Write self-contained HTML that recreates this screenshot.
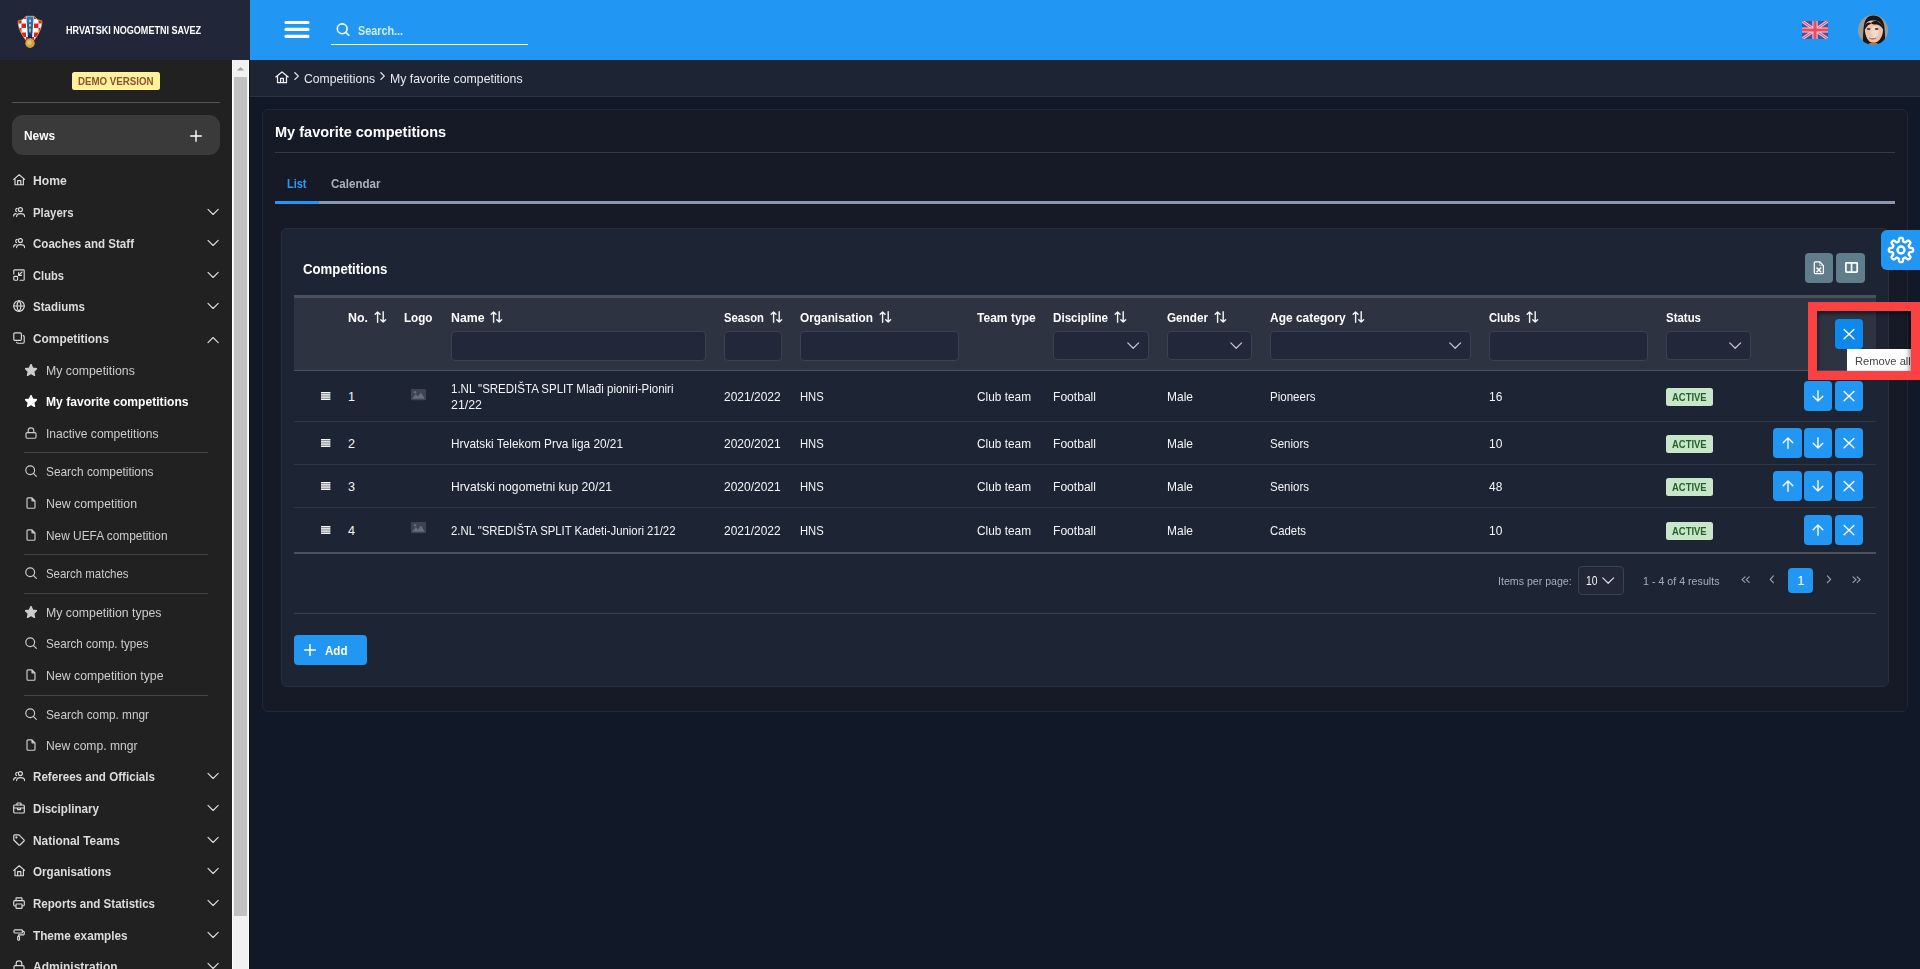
<!DOCTYPE html>
<html lang="en"><head><meta charset="utf-8"><title>My favorite competitions</title>
<style>
html,body{margin:0;padding:0;background:#111827;}
body{width:1920px;height:969px;overflow:hidden;position:relative;font-family:"Liberation Sans", sans-serif;}
#root{position:absolute;left:0;top:0;width:1920px;height:969px;overflow:hidden;}
#root div,#root span.t,#root svg{position:absolute;box-sizing:border-box;}
span.t{white-space:nowrap;}
</style></head>
<body><div id="root">
<section class="page-backgrounds">
<div style="left:0px;top:0px;width:1920px;height:969px;background:#111827"></div>
<div style="left:0px;top:60px;width:232px;height:909px;background:#212121"></div>
<div style="left:0px;top:0px;width:250px;height:60px;background:#222639"></div>
<div style="left:232px;top:60px;width:17px;height:909px;background:#f1f1f1;border-left:1px solid #fff;border-right:1px solid #fff"></div>
<div style="left:234px;top:77px;width:13px;height:839px;background:#c1c1c1"></div>
<svg style="left:232px;top:60px;" width="17" height="17" viewBox="0 0 17 17"><path d="M4.8 10.6 L8.5 6.9 L12.2 10.6 Z" fill="#a3a3a3"/></svg>
<div style="left:249px;top:60px;width:1px;height:909px;background:#0e1320"></div>
<div style="left:250px;top:0px;width:1670px;height:60px;background:#2196f3"></div>
<div style="left:250px;top:60px;width:1670px;height:37px;background:#1d2433;border-bottom:1px solid #2b3242"></div>
</section>
<aside class="sidebar">
<svg style="left:17px;top:14.6px;" width="26" height="34" viewBox="0 0 26 34"><defs><clipPath id="sh"><path d="M1 6 C4 5.5 7 4 9 1.2 L17 1.2 C19 4 22 5.5 25 6 C25 14 20 22 15.5 27 L10.5 27 C6 22 1 14 1 6 Z"/></clipPath></defs>
<g clip-path="url(#sh)"><rect width="26" height="30" fill="#fff"/>
<g fill="#e0231c"><rect x="0" y="4" width="4.5" height="4.5"/><rect x="4.5" y="0" width="4.5" height="4"/><rect x="4.5" y="8.5" width="4.5" height="4.5"/><rect x="0" y="13" width="4.5" height="4.5"/><rect x="4.5" y="17.5" width="4.5" height="4.5"/><rect x="17" y="0" width="4.5" height="4"/><rect x="21.5" y="4" width="4.5" height="4.5"/><rect x="17" y="8.5" width="4.5" height="4.5"/><rect x="21.5" y="13" width="4.5" height="4.5"/><rect x="17" y="17.5" width="4.5" height="4.5"/><rect x="9" y="22" width="3" height="4.5"/><rect x="14" y="22" width="3" height="4.5"/></g>
<linearGradient id="bg1" x1="0" y1="0" x2="0" y2="1"><stop offset="0" stop-color="#2f7fd0"/><stop offset=".7" stop-color="#1a4f9a"/><stop offset="1" stop-color="#0f1f45"/></linearGradient><path d="M9.3 1.2 L16.7 1.2 L15 23.5 L11 23.5 Z" fill="url(#bg1)"/><g fill="#e8d070" opacity=".85"><rect x="12" y="4.6" width="2" height="2.6"/><rect x="12" y="9" width="2" height="2.6"/><rect x="12.2" y="13.4" width="1.6" height="4"/></g></g>
<path d="M1 6 C4 5.5 7 4 9 1.2 L17 1.2 C19 4 22 5.5 25 6 C25 14 20 22 15.5 27 L10.5 27 C6 22 1 14 1 6 Z" fill="none" stroke="#c9a24a" stroke-width=".7"/>
<circle cx="13" cy="28.3" r="4.7" fill="#d0a53f"/><circle cx="12.3" cy="27.6" r="2.3" fill="#e3c46e"/></svg>
<span id="t0" class="t" style="left:66px;top:23px;font-size:10px;font-weight:700;color:#ffffff;line-height:15px;letter-spacing:0px;transform:scaleX(0.9043);transform-origin:0 0;">HRVATSKI NOGOMETNI SAVEZ</span>
<div style="left:72px;top:72px;width:88px;height:18px;background:#fff29a;border-radius:2.5px"></div>
<span id="t1" class="t" style="left:78px;top:74px;font-size:10.2px;font-weight:700;color:#8d5030;line-height:15px;letter-spacing:0px;transform:scaleX(0.9527);transform-origin:0 0;">DEMO VERSION</span>
<div style="left:12px;top:102px;width:208px;height:1px;background:#555555"></div>
<div style="left:12px;top:115px;width:208px;height:40px;background:#3a3a3a;border-radius:11px"></div>
<span id="t2" class="t" style="left:24px;top:126px;font-size:12.8px;font-weight:700;color:#ffffff;line-height:19px;letter-spacing:0px;transform:scaleX(0.9271);transform-origin:0 0;">News</span>
<svg style="left:190px;top:129.5px;" width="12" height="12" viewBox="0 0 12 12"><path d="M6 .7v10.6M.7 6h10.6" stroke="#fff" stroke-width="1.4" fill="none" stroke-linecap="round"/></svg>
<svg style="left:12.7px;top:173.7px;" width="12" height="12" viewBox="0 0 12 12"><path fill="none" stroke="#dcdcdc" stroke-width="1.15" stroke-linecap="round" stroke-linejoin="round" d="M.7 5.4 L6.2 .8 L11.7 5.4 M2 4.6 V10.7 H10.4 V4.6 M4.6 10.6 V6.6 H7.8 V10.6"/></svg>
<span id="t3" class="t" style="left:33.3px;top:172px;font-size:12.6px;font-weight:700;color:#dcdcdc;line-height:18px;letter-spacing:0px;transform:scaleX(0.9657);transform-origin:0 0;">Home</span>
<svg style="left:12.7px;top:205.7px;" width="12" height="12" viewBox="0 0 12 12"><g fill="none" stroke="#dcdcdc" stroke-width="1.15" stroke-linecap="round" stroke-linejoin="round"><circle cx="7.4" cy="3.6" r="2"/><path d="M3.6 10.6 C3.6 8.4 5.2 7.6 7.4 7.6 C9.8 7.6 11.6 8.4 11.6 10.6"/><path d="M4.2 2.4 A1.7 1.7 0 0 0 3.6 5.6 M.6 10 C.6 8.4 1.6 7.8 3 7.6"/></g></svg>
<span id="t4" class="t" style="left:33.3px;top:204px;font-size:12.6px;font-weight:700;color:#dcdcdc;line-height:18px;letter-spacing:0px;transform:scaleX(0.9035);transform-origin:0 0;">Players</span>
<svg style="left:207.2px;top:206px;" width="12" height="12" viewBox="0 0 12 12"><path fill="none" stroke="#dcdcdc" stroke-width="1.15" stroke-linecap="round" stroke-linejoin="round" stroke-width="1.3" d="M1 3.3 L6.1 8.5 L11.2 3.3"/></svg>
<svg style="left:12.7px;top:236.7px;" width="12" height="12" viewBox="0 0 12 12"><g fill="none" stroke="#dcdcdc" stroke-width="1.15" stroke-linecap="round" stroke-linejoin="round"><circle cx="7.4" cy="3.6" r="2"/><path d="M3.6 10.6 C3.6 8.4 5.2 7.6 7.4 7.6 C9.8 7.6 11.6 8.4 11.6 10.6"/><path d="M4.2 2.4 A1.7 1.7 0 0 0 3.6 5.6 M.6 10 C.6 8.4 1.6 7.8 3 7.6"/></g></svg>
<span id="t5" class="t" style="left:33.3px;top:235px;font-size:12.6px;font-weight:700;color:#dcdcdc;line-height:18px;letter-spacing:0px;transform:scaleX(0.9192);transform-origin:0 0;">Coaches and Staff</span>
<svg style="left:207.2px;top:237px;" width="12" height="12" viewBox="0 0 12 12"><path fill="none" stroke="#dcdcdc" stroke-width="1.15" stroke-linecap="round" stroke-linejoin="round" stroke-width="1.3" d="M1 3.3 L6.1 8.5 L11.2 3.3"/></svg>
<svg style="left:12.7px;top:268.7px;" width="12" height="12" viewBox="0 0 12 12"><g fill="none" stroke="#dcdcdc" stroke-width="1.15" stroke-linecap="round" stroke-linejoin="round"><path d="M.8 5 V1.6 A.8 .8 0 0 1 1.6 .8 H10.4 A.8 .8 0 0 1 11.2 1.6 V10.4 A.8 .8 0 0 1 10.4 11.2 H7"/><rect x=".8" y="7.4" width="3.8" height="3.8" rx=".8"/><path d="M9 3 L5.6 6.4 M5.6 3.6 V6.4 H8.4"/></g></svg>
<span id="t6" class="t" style="left:33.3px;top:267px;font-size:12.6px;font-weight:700;color:#dcdcdc;line-height:18px;letter-spacing:0px;transform:scaleX(0.8861);transform-origin:0 0;">Clubs</span>
<svg style="left:207.2px;top:269px;" width="12" height="12" viewBox="0 0 12 12"><path fill="none" stroke="#dcdcdc" stroke-width="1.15" stroke-linecap="round" stroke-linejoin="round" stroke-width="1.3" d="M1 3.3 L6.1 8.5 L11.2 3.3"/></svg>
<svg style="left:12.7px;top:299.7px;" width="12" height="12" viewBox="0 0 12 12"><g fill="none" stroke="#dcdcdc" stroke-width="1.15" stroke-linecap="round" stroke-linejoin="round"><circle cx="6" cy="6" r="5.3"/><path d="M.7 6 H11.3 M6 .7 C3.4 3 3.4 9 6 11.3 M6 .7 C8.6 3 8.6 9 6 11.3"/></g></svg>
<span id="t7" class="t" style="left:33.3px;top:298px;font-size:12.6px;font-weight:700;color:#dcdcdc;line-height:18px;letter-spacing:0px;transform:scaleX(0.9173);transform-origin:0 0;">Stadiums</span>
<svg style="left:207.2px;top:300px;" width="12" height="12" viewBox="0 0 12 12"><path fill="none" stroke="#dcdcdc" stroke-width="1.15" stroke-linecap="round" stroke-linejoin="round" stroke-width="1.3" d="M1 3.3 L6.1 8.5 L11.2 3.3"/></svg>
<svg style="left:12.7px;top:331.7px;" width="12" height="12" viewBox="0 0 12 12"><g fill="none" stroke="#dcdcdc" stroke-width="1.15" stroke-linecap="round" stroke-linejoin="round"><rect x=".8" y=".8" width="7.6" height="7.6" rx="1.2"/><path d="M10.2 3.6 A1.2 1.2 0 0 1 11.2 4.8 V10 A1.2 1.2 0 0 1 10 11.2 H4.8 A1.2 1.2 0 0 1 3.6 10.2"/></g></svg>
<span id="t8" class="t" style="left:33.3px;top:330px;font-size:12.6px;font-weight:700;color:#dcdcdc;line-height:18px;letter-spacing:0px;transform:scaleX(0.9445);transform-origin:0 0;">Competitions</span>
<svg style="left:207.2px;top:334.0px;" width="12" height="12" viewBox="0 0 12 12"><path fill="none" stroke="#dcdcdc" stroke-width="1.15" stroke-linecap="round" stroke-linejoin="round" stroke-width="1.3" d="M1 8.7 L6.1 3.5 L11.2 8.7"/></svg>
<svg style="left:12.7px;top:769.7px;" width="12" height="12" viewBox="0 0 12 12"><g fill="none" stroke="#dcdcdc" stroke-width="1.15" stroke-linecap="round" stroke-linejoin="round"><circle cx="7.4" cy="3.6" r="2"/><path d="M3.6 10.6 C3.6 8.4 5.2 7.6 7.4 7.6 C9.8 7.6 11.6 8.4 11.6 10.6"/><path d="M4.2 2.4 A1.7 1.7 0 0 0 3.6 5.6 M.6 10 C.6 8.4 1.6 7.8 3 7.6"/></g></svg>
<span id="t9" class="t" style="left:33.3px;top:768px;font-size:12.6px;font-weight:700;color:#dcdcdc;line-height:18px;letter-spacing:0px;transform:scaleX(0.9222);transform-origin:0 0;">Referees and Officials</span>
<svg style="left:207.2px;top:770px;" width="12" height="12" viewBox="0 0 12 12"><path fill="none" stroke="#dcdcdc" stroke-width="1.15" stroke-linecap="round" stroke-linejoin="round" stroke-width="1.3" d="M1 3.3 L6.1 8.5 L11.2 3.3"/></svg>
<svg style="left:12.7px;top:801.7px;" width="12" height="12" viewBox="0 0 12 12"><g fill="none" stroke="#dcdcdc" stroke-width="1.15" stroke-linecap="round" stroke-linejoin="round"><rect x=".7" y="3" width="10.6" height="8" rx="1"/><path d="M4 3 V1.6 A.6 .6 0 0 1 4.6 1 H7.4 A.6 .6 0 0 1 8 1.6 V3 M.7 6 H11.3 M4.5 6 V7.6 H7.5 V6"/></g></svg>
<span id="t10" class="t" style="left:33.3px;top:800px;font-size:12.6px;font-weight:700;color:#dcdcdc;line-height:18px;letter-spacing:0px;transform:scaleX(0.9243);transform-origin:0 0;">Disciplinary</span>
<svg style="left:207.2px;top:802px;" width="12" height="12" viewBox="0 0 12 12"><path fill="none" stroke="#dcdcdc" stroke-width="1.15" stroke-linecap="round" stroke-linejoin="round" stroke-width="1.3" d="M1 3.3 L6.1 8.5 L11.2 3.3"/></svg>
<svg style="left:12.7px;top:833.7px;" width="12" height="12" viewBox="0 0 12 12"><g fill="none" stroke="#dcdcdc" stroke-width="1.15" stroke-linecap="round" stroke-linejoin="round"><path d="M.8 1.6 A.8 .8 0 0 1 1.6 .8 H6 L11 5.8 A.9 .9 0 0 1 11 7 L7 11 A.9 .9 0 0 1 5.8 11 L.8 6 Z"/><circle cx="3.4" cy="3.4" r=".5"/></g></svg>
<span id="t11" class="t" style="left:33.3px;top:832px;font-size:12.6px;font-weight:700;color:#dcdcdc;line-height:18px;letter-spacing:0px;transform:scaleX(0.9440);transform-origin:0 0;">National Teams</span>
<svg style="left:207.2px;top:834px;" width="12" height="12" viewBox="0 0 12 12"><path fill="none" stroke="#dcdcdc" stroke-width="1.15" stroke-linecap="round" stroke-linejoin="round" stroke-width="1.3" d="M1 3.3 L6.1 8.5 L11.2 3.3"/></svg>
<svg style="left:12.7px;top:864.7px;" width="12" height="12" viewBox="0 0 12 12"><path fill="none" stroke="#dcdcdc" stroke-width="1.15" stroke-linecap="round" stroke-linejoin="round" d="M.7 5.4 L6.2 .8 L11.7 5.4 M2 4.6 V10.7 H10.4 V4.6 M4.6 10.6 V6.6 H7.8 V10.6"/></svg>
<span id="t12" class="t" style="left:33.3px;top:863px;font-size:12.6px;font-weight:700;color:#dcdcdc;line-height:18px;letter-spacing:0px;transform:scaleX(0.9246);transform-origin:0 0;">Organisations</span>
<svg style="left:207.2px;top:865px;" width="12" height="12" viewBox="0 0 12 12"><path fill="none" stroke="#dcdcdc" stroke-width="1.15" stroke-linecap="round" stroke-linejoin="round" stroke-width="1.3" d="M1 3.3 L6.1 8.5 L11.2 3.3"/></svg>
<svg style="left:12.7px;top:896.7px;" width="12" height="12" viewBox="0 0 12 12"><g fill="none" stroke="#dcdcdc" stroke-width="1.15" stroke-linecap="round" stroke-linejoin="round"><path d="M3 3.6 V1.4 A.6 .6 0 0 1 3.6 .8 H8.4 A.6 .6 0 0 1 9 1.4 V3.6"/><rect x=".7" y="3.6" width="10.6" height="5.4" rx="1.2"/><rect x="3" y="7" width="6" height="4.3" rx=".6" fill="#212121"/></g></svg>
<span id="t13" class="t" style="left:33.3px;top:895px;font-size:12.6px;font-weight:700;color:#dcdcdc;line-height:18px;letter-spacing:0px;transform:scaleX(0.9175);transform-origin:0 0;">Reports and Statistics</span>
<svg style="left:207.2px;top:897px;" width="12" height="12" viewBox="0 0 12 12"><path fill="none" stroke="#dcdcdc" stroke-width="1.15" stroke-linecap="round" stroke-linejoin="round" stroke-width="1.3" d="M1 3.3 L6.1 8.5 L11.2 3.3"/></svg>
<svg style="left:12.7px;top:928.7px;" width="12" height="12" viewBox="0 0 12 12"><g fill="none" stroke="#dcdcdc" stroke-width="1.15" stroke-linecap="round" stroke-linejoin="round"><rect x="1" y=".8" width="8.4" height="3.2" rx=".8"/><path d="M9.4 2.4 H10.4 A.8 .8 0 0 1 11.2 3.2 V5 A.8 .8 0 0 1 10.4 5.8 H5.6 V7.4"/><rect x="4.7" y="7.4" width="1.8" height="3.8" rx=".7"/></g></svg>
<span id="t14" class="t" style="left:33.3px;top:927px;font-size:12.6px;font-weight:700;color:#dcdcdc;line-height:18px;letter-spacing:0px;transform:scaleX(0.9319);transform-origin:0 0;">Theme examples</span>
<svg style="left:207.2px;top:929px;" width="12" height="12" viewBox="0 0 12 12"><path fill="none" stroke="#dcdcdc" stroke-width="1.15" stroke-linecap="round" stroke-linejoin="round" stroke-width="1.3" d="M1 3.3 L6.1 8.5 L11.2 3.3"/></svg>
<svg style="left:12.7px;top:959.7px;" width="12" height="12" viewBox="0 0 12 12"><g fill="none" stroke="#dcdcdc" stroke-width="1.15" stroke-linecap="round" stroke-linejoin="round"><rect x="1" y="5.6" width="10" height="5.6" rx="1.2"/><path d="M3.2 5.6 V3.6 A2.8 2.8 0 0 1 8.8 3.6 V5.6"/></g></svg>
<span id="t15" class="t" style="left:33.3px;top:958px;font-size:12.6px;font-weight:700;color:#dcdcdc;line-height:18px;letter-spacing:0px;transform:scaleX(0.9521);transform-origin:0 0;">Administration</span>
<svg style="left:207.2px;top:960px;" width="12" height="12" viewBox="0 0 12 12"><path fill="none" stroke="#dcdcdc" stroke-width="1.15" stroke-linecap="round" stroke-linejoin="round" stroke-width="1.3" d="M1 3.3 L6.1 8.5 L11.2 3.3"/></svg>
<svg style="left:25px;top:363.8px;" width="12" height="12" viewBox="0 0 12 12"><path fill="#cdcdcd" stroke="#cdcdcd" stroke-width="1" stroke-linejoin="round" transform="translate(-.95 -.9) scale(1.16)" d="M6 1 L7.5 4.3 L11.1 4.7 L8.4 7.2 L9.1 10.8 L6 9 L2.9 10.8 L3.6 7.2 L.9 4.7 L4.5 4.3 Z"/></svg>
<span id="t16" class="t" style="left:45.6px;top:362px;font-size:12.6px;font-weight:400;color:#cdcdcd;line-height:18px;letter-spacing:0px;transform:scaleX(0.9758);transform-origin:0 0;">My competitions</span>
<svg style="left:25px;top:394.8px;" width="12" height="12" viewBox="0 0 12 12"><path fill="#ffffff" stroke="#ffffff" stroke-width="1" stroke-linejoin="round" transform="translate(-.95 -.9) scale(1.16)" d="M6 1 L7.5 4.3 L11.1 4.7 L8.4 7.2 L9.1 10.8 L6 9 L2.9 10.8 L3.6 7.2 L.9 4.7 L4.5 4.3 Z"/></svg>
<span id="t17" class="t" style="left:45.6px;top:393px;font-size:12.6px;font-weight:700;color:#ffffff;line-height:18px;letter-spacing:0px;transform:scaleX(0.9605);transform-origin:0 0;">My favorite competitions</span>
<svg style="left:25px;top:426.8px;" width="12" height="12" viewBox="0 0 12 12"><g fill="none" stroke="#cdcdcd" stroke-width="1.15" stroke-linecap="round" stroke-linejoin="round"><rect x="1" y="5.6" width="10" height="5.6" rx="1.2"/><path d="M3.2 5.6 V3.6 A2.8 2.8 0 0 1 8.8 3.6 V5.6"/></g></svg>
<span id="t18" class="t" style="left:45.6px;top:425px;font-size:12.6px;font-weight:400;color:#cdcdcd;line-height:18px;letter-spacing:0px;transform:scaleX(0.9566);transform-origin:0 0;">Inactive competitions</span>
<svg style="left:25px;top:464.8px;" width="12" height="12" viewBox="0 0 12 12"><g fill="none" stroke="#cdcdcd" stroke-width="1.15" stroke-linecap="round" stroke-linejoin="round"><circle cx="5.2" cy="5.2" r="4.4"/><path d="M8.4 8.4 L11.3 11.3"/></g></svg>
<span id="t19" class="t" style="left:45.6px;top:463px;font-size:12.6px;font-weight:400;color:#cdcdcd;line-height:18px;letter-spacing:0px;transform:scaleX(0.9421);transform-origin:0 0;">Search competitions</span>
<svg style="left:25px;top:496.8px;" width="12" height="12" viewBox="0 0 12 12"><g fill="none" stroke="#cdcdcd" stroke-width="1.15" stroke-linecap="round" stroke-linejoin="round"><path d="M2 1.8 A1 1 0 0 1 3 .8 H7 L10 3.8 V10.2 A1 1 0 0 1 9 11.2 H3 A1 1 0 0 1 2 10.2 Z M7 .8 V3.8 H10"/></g></svg>
<span id="t20" class="t" style="left:45.6px;top:495px;font-size:12.6px;font-weight:400;color:#cdcdcd;line-height:18px;letter-spacing:0px;transform:scaleX(0.9773);transform-origin:0 0;">New competition</span>
<svg style="left:25px;top:528.8px;" width="12" height="12" viewBox="0 0 12 12"><g fill="none" stroke="#cdcdcd" stroke-width="1.15" stroke-linecap="round" stroke-linejoin="round"><path d="M2 1.8 A1 1 0 0 1 3 .8 H7 L10 3.8 V10.2 A1 1 0 0 1 9 11.2 H3 A1 1 0 0 1 2 10.2 Z M7 .8 V3.8 H10"/></g></svg>
<span id="t21" class="t" style="left:45.6px;top:527px;font-size:12.6px;font-weight:400;color:#cdcdcd;line-height:18px;letter-spacing:0px;transform:scaleX(0.9433);transform-origin:0 0;">New UEFA competition</span>
<svg style="left:25px;top:566.8px;" width="12" height="12" viewBox="0 0 12 12"><g fill="none" stroke="#cdcdcd" stroke-width="1.15" stroke-linecap="round" stroke-linejoin="round"><circle cx="5.2" cy="5.2" r="4.4"/><path d="M8.4 8.4 L11.3 11.3"/></g></svg>
<span id="t22" class="t" style="left:45.6px;top:565px;font-size:12.6px;font-weight:400;color:#cdcdcd;line-height:18px;letter-spacing:0px;transform:scaleX(0.9066);transform-origin:0 0;">Search matches</span>
<svg style="left:25px;top:605.8px;" width="12" height="12" viewBox="0 0 12 12"><path fill="#cdcdcd" stroke="#cdcdcd" stroke-width="1" stroke-linejoin="round" transform="translate(-.95 -.9) scale(1.16)" d="M6 1 L7.5 4.3 L11.1 4.7 L8.4 7.2 L9.1 10.8 L6 9 L2.9 10.8 L3.6 7.2 L.9 4.7 L4.5 4.3 Z"/></svg>
<span id="t23" class="t" style="left:45.6px;top:604px;font-size:12.6px;font-weight:400;color:#cdcdcd;line-height:18px;letter-spacing:0px;transform:scaleX(0.9764);transform-origin:0 0;">My competition types</span>
<svg style="left:25px;top:636.8px;" width="12" height="12" viewBox="0 0 12 12"><g fill="none" stroke="#cdcdcd" stroke-width="1.15" stroke-linecap="round" stroke-linejoin="round"><circle cx="5.2" cy="5.2" r="4.4"/><path d="M8.4 8.4 L11.3 11.3"/></g></svg>
<span id="t24" class="t" style="left:45.6px;top:635px;font-size:12.6px;font-weight:400;color:#cdcdcd;line-height:18px;letter-spacing:0px;transform:scaleX(0.9210);transform-origin:0 0;">Search comp. types</span>
<svg style="left:25px;top:668.8px;" width="12" height="12" viewBox="0 0 12 12"><g fill="none" stroke="#cdcdcd" stroke-width="1.15" stroke-linecap="round" stroke-linejoin="round"><path d="M2 1.8 A1 1 0 0 1 3 .8 H7 L10 3.8 V10.2 A1 1 0 0 1 9 11.2 H3 A1 1 0 0 1 2 10.2 Z M7 .8 V3.8 H10"/></g></svg>
<span id="t25" class="t" style="left:45.6px;top:667px;font-size:12.6px;font-weight:400;color:#cdcdcd;line-height:18px;letter-spacing:0px;transform:scaleX(0.9759);transform-origin:0 0;">New competition type</span>
<svg style="left:25px;top:707.8px;" width="12" height="12" viewBox="0 0 12 12"><g fill="none" stroke="#cdcdcd" stroke-width="1.15" stroke-linecap="round" stroke-linejoin="round"><circle cx="5.2" cy="5.2" r="4.4"/><path d="M8.4 8.4 L11.3 11.3"/></g></svg>
<span id="t26" class="t" style="left:45.6px;top:706px;font-size:12.6px;font-weight:400;color:#cdcdcd;line-height:18px;letter-spacing:0px;transform:scaleX(0.9373);transform-origin:0 0;">Search comp. mngr</span>
<svg style="left:25px;top:738.8px;" width="12" height="12" viewBox="0 0 12 12"><g fill="none" stroke="#cdcdcd" stroke-width="1.15" stroke-linecap="round" stroke-linejoin="round"><path d="M2 1.8 A1 1 0 0 1 3 .8 H7 L10 3.8 V10.2 A1 1 0 0 1 9 11.2 H3 A1 1 0 0 1 2 10.2 Z M7 .8 V3.8 H10"/></g></svg>
<span id="t27" class="t" style="left:45.6px;top:737px;font-size:12.6px;font-weight:400;color:#cdcdcd;line-height:18px;letter-spacing:0px;transform:scaleX(0.9613);transform-origin:0 0;">New comp. mngr</span>
<div style="left:24px;top:452px;width:184px;height:1px;background:#454545"></div>
<div style="left:24px;top:554px;width:184px;height:1px;background:#454545"></div>
<div style="left:24px;top:593px;width:184px;height:1px;background:#454545"></div>
<div style="left:24px;top:695px;width:184px;height:1px;background:#454545"></div>
</aside>
<header class="topbar">
<svg style="left:284px;top:20px;" width="26" height="19" viewBox="0 0 26 19"><g fill="#fff"><rect x=".5" y=".9" width="25" height="3.2" rx="1.6"/><rect x=".5" y="7.8" width="25" height="3.2" rx="1.6"/><rect x=".5" y="14.8" width="25" height="3.2" rx="1.6"/></g></svg>
<svg style="left:335px;top:22px;" width="16" height="15" viewBox="0 0 16 15"><g fill="none" stroke="#f2f9ff" stroke-width="1.6" stroke-linecap="round"><circle cx="7.2" cy="6.8" r="4.9"/><path d="M10.8 10.4 L13.9 13.3"/></g></svg>
<span id="t28" class="t" style="left:358px;top:22px;font-size:12.6px;font-weight:700;color:#d3eafd;line-height:18px;letter-spacing:0px;transform:scaleX(0.8569);transform-origin:0 0;">Search...</span>
<div style="left:331px;top:43.7px;width:197px;height:1.6px;background:#ffffff"></div>
<svg style="left:1802px;top:21px;" width="26" height="18" viewBox="0 0 26 18"><rect width="26" height="18" fill="#4754a6"/>
<path d="M0 0 L26 18 M26 0 L0 18" stroke="#e7d3e2" stroke-width="3"/>
<path d="M0 0 L26 18 M26 0 L0 18" stroke="#ee5a72" stroke-width="1.2"/>
<path d="M13 0 V18 M0 9 H26" stroke="#f3d5dc" stroke-width="5.2"/>
<path d="M13 0 V18 M0 9 H26" stroke="#ef4860" stroke-width="3.2"/></svg>
<svg style="left:1858px;top:15px;" width="30" height="30" viewBox="0 0 30 30"><defs><clipPath id="av"><circle cx="15" cy="15" r="15"/></clipPath><filter id="bl" x="-10%" y="-10%" width="120%" height="120%"><feGaussianBlur stdDeviation=".55"/></filter></defs><g clip-path="url(#av)"><g filter="url(#bl)">
<rect x="-2" y="-2" width="34" height="34" fill="#9b9b97"/>
<path d="M4.5 32 C5 24 5 16 6 10 C7 3 11 .2 15.5 .4 C21 .5 25.5 4 26.3 11 C27 18 27.5 25 26.5 32 Z" fill="#1b1718"/>
<path d="M6.8 14 C6.6 8 10 5.5 15 5.6 C20.5 5.5 24.6 8 25 14 C25.3 20 22 27.6 15.6 27.8 C10 27.8 7 21 6.8 14 Z" fill="#e9c3ad"/>
<ellipse cx="16.8" cy="16.5" rx="4" ry="5.5" fill="#f6e0d2" opacity=".75"/>
<path d="M6 13.5 C7 8 10 6.2 13.5 8.4 C10.5 9.5 8.5 11 6.6 15.5 Z M13 8 C15 5.6 19.5 5.4 21.5 7.4 C24 8.5 25.6 11.5 25.6 15.5 C24 11.6 21.5 9.8 18.5 9.4 C16.5 9.6 14.5 9.4 13 8 Z" fill="#1b1718"/>
<ellipse cx="10.6" cy="14" rx="1.9" ry="1" fill="#4a3b38"/><ellipse cx="18.7" cy="14" rx="1.9" ry="1" fill="#4a3b38"/>
<path d="M11.2 21.4 C13 22.4 16.5 22.4 18.2 21.4 C17.4 23.6 12.4 23.8 11.2 21.4 Z" fill="#fbeeea"/>
<path d="M11.4 22.8 C13 24.6 16.4 24.6 18 22.8 C16.6 24 12.8 24 11.4 22.8 Z" fill="#c9545a" stroke="#c9545a" stroke-width=".7"/>
<path d="M9.5 31 C10 28 12 27.6 15.5 27.8 C19 27.6 20.5 28 21 31 Z" fill="#c9712c"/>
</g></g></svg>
</header>
<nav class="breadcrumb">
<svg style="left:274.5px;top:70.6px;" width="14" height="13" viewBox="0 0 14 13"><path fill="none" stroke="#f0f0f0" stroke-width="1.25" stroke-linejoin="round" stroke-linecap="round" d="M.8 5.9 L7 .9 L13.2 5.9 M2.5 4.9 V11.7 H11.5 V4.9 M5.6 11.6 V7.4 H8.4 V11.6"/></svg>
<svg style="left:293.7px;top:72.4px;" width="6" height="9" viewBox="0 0 6 9"><path fill="none" stroke="#e8e8e8" stroke-width="1.3" stroke-linecap="round" stroke-linejoin="round" d="M.9 .8 L4.3 4.1 L.9 7.4"/></svg>
<span id="t29" class="t" style="left:304px;top:70px;font-size:12.6px;font-weight:400;color:#e8eaee;line-height:18px;letter-spacing:0px;transform:scaleX(0.9660);transform-origin:0 0;">Competitions</span>
<svg style="left:380.2px;top:72.4px;" width="6" height="9" viewBox="0 0 6 9"><path fill="none" stroke="#e8e8e8" stroke-width="1.3" stroke-linecap="round" stroke-linejoin="round" d="M.9 .8 L4.3 4.1 L.9 7.4"/></svg>
<span id="t30" class="t" style="left:390.4px;top:70px;font-size:12.6px;font-weight:400;color:#e8eaee;line-height:18px;letter-spacing:0px;transform:scaleX(0.9765);transform-origin:0 0;">My favorite competitions</span>
</nav>
<main class="content">
<div style="left:262px;top:109px;width:1646px;height:603px;background:#161a27;border:1px solid #232836;border-radius:6px"></div>
<span id="t31" class="t" style="left:275.3px;top:121px;font-size:15.2px;font-weight:700;color:#ffffff;line-height:21px;letter-spacing:0px;transform:scaleX(0.9569);transform-origin:0 0;">My favorite competitions</span>
<div style="left:275px;top:152px;width:1620px;height:1px;background:#343a48"></div>
<span id="t32" class="t" style="left:287px;top:175px;font-size:12.6px;font-weight:700;color:#2b9af3;line-height:18px;letter-spacing:0px;transform:scaleX(0.8709);transform-origin:0 0;">List</span>
<span id="t33" class="t" style="left:330.5px;top:175px;font-size:12.6px;font-weight:700;color:#aab1bf;line-height:18px;letter-spacing:0px;transform:scaleX(0.9183);transform-origin:0 0;">Calendar</span>
<div style="left:275px;top:201px;width:1620px;height:3px;background:#8b97ad"></div>
<div style="left:275px;top:201px;width:44px;height:3px;background:#2196f3"></div>
<div style="left:281px;top:228px;width:1608px;height:459px;background:#1d2534;border:1px solid #272f3f;border-radius:6px"></div>
<span id="t34" class="t" style="left:302.5px;top:259px;font-size:14px;font-weight:700;color:#ffffff;line-height:20px;letter-spacing:0px;transform:scaleX(0.9424);transform-origin:0 0;">Competitions</span>
<div style="left:1805px;top:253px;width:28px;height:30px;background:#607d8b;border-radius:4px"></div>
<div style="left:1836px;top:253px;width:29px;height:30px;background:#607d8b;border-radius:4px"></div>
<svg style="left:1813.4px;top:261px;" width="12" height="14" viewBox="0 0 12 14"><g fill="none" stroke="#fff" stroke-width="1.25" stroke-linejoin="round" stroke-linecap="round"><path d="M1.3 1.8 A1 1 0 0 1 2.3 .8 H6.6 L10.4 4.6 V11.6 A1 1 0 0 1 9.4 12.6 H2.3 A1 1 0 0 1 1.3 11.6 Z"/><path d="M6.6 1 V4.6 H10.2" stroke-width=".8" opacity=".65"/><path d="M4 7 L7.7 10.8 M7.7 7 L4 10.8" stroke-width="1.6"/></g></svg>
<svg style="left:1844px;top:261px;" width="15" height="13" viewBox="0 0 15 13"><g fill="none" stroke="#fff" stroke-width="1.7"><rect x="1.9" y="1.8" width="11.3" height="9.4" rx=".6"/><path d="M7.55 1.8 V11.2"/></g></svg>
<div style="left:294px;top:295px;width:1582px;height:3px;background:#4a505d"></div>
<div style="left:294px;top:298px;width:1582px;height:72px;background:#2d3341"></div>
<div style="left:294px;top:370px;width:1582px;height:1px;background:#4a5160"></div>
<div style="left:294px;top:421px;width:1582px;height:1px;background:#2f3646"></div>
<div style="left:294px;top:464px;width:1582px;height:1px;background:#2f3646"></div>
<div style="left:294px;top:507px;width:1582px;height:1px;background:#2f3646"></div>
<div style="left:294px;top:551.5px;width:1582px;height:2.5px;background:#4a505d"></div>
<div style="left:294px;top:613px;width:1582px;height:1px;background:#3b4252"></div>
<span id="t35" class="t" style="left:348px;top:309px;font-size:12.6px;font-weight:700;color:#ffffff;line-height:18px;letter-spacing:0px;transform:scaleX(0.9854);transform-origin:0 0;">No.</span>
<svg style="left:374px;top:311px;" width="13" height="12" viewBox="0 0 13 12"><g fill="none" stroke="#f6f6f6" stroke-width="1.4" stroke-linecap="round" stroke-linejoin="round"><path d="M3.6 11.2 V1 M1.2 3.3 L3.6 .9 L6 3.3"/><path d="M9.2 .8 V11 M6.8 8.7 L9.2 11.1 L11.6 8.7"/></g></svg>
<span id="t36" class="t" style="left:404px;top:309px;font-size:12.6px;font-weight:700;color:#ffffff;line-height:18px;letter-spacing:0px;transform:scaleX(0.9259);transform-origin:0 0;">Logo</span>
<span id="t37" class="t" style="left:450.5px;top:309px;font-size:12.6px;font-weight:700;color:#ffffff;line-height:18px;letter-spacing:0px;transform:scaleX(0.9763);transform-origin:0 0;">Name</span>
<svg style="left:490px;top:311px;" width="13" height="12" viewBox="0 0 13 12"><g fill="none" stroke="#f6f6f6" stroke-width="1.4" stroke-linecap="round" stroke-linejoin="round"><path d="M3.6 11.2 V1 M1.2 3.3 L3.6 .9 L6 3.3"/><path d="M9.2 .8 V11 M6.8 8.7 L9.2 11.1 L11.6 8.7"/></g></svg>
<span id="t38" class="t" style="left:724px;top:309px;font-size:12.6px;font-weight:700;color:#ffffff;line-height:18px;letter-spacing:0px;transform:scaleX(0.8926);transform-origin:0 0;">Season</span>
<svg style="left:770px;top:311px;" width="13" height="12" viewBox="0 0 13 12"><g fill="none" stroke="#f6f6f6" stroke-width="1.4" stroke-linecap="round" stroke-linejoin="round"><path d="M3.6 11.2 V1 M1.2 3.3 L3.6 .9 L6 3.3"/><path d="M9.2 .8 V11 M6.8 8.7 L9.2 11.1 L11.6 8.7"/></g></svg>
<span id="t39" class="t" style="left:800px;top:309px;font-size:12.6px;font-weight:700;color:#ffffff;line-height:18px;letter-spacing:0px;transform:scaleX(0.9399);transform-origin:0 0;">Organisation</span>
<svg style="left:878.7px;top:311px;" width="13" height="12" viewBox="0 0 13 12"><g fill="none" stroke="#f6f6f6" stroke-width="1.4" stroke-linecap="round" stroke-linejoin="round"><path d="M3.6 11.2 V1 M1.2 3.3 L3.6 .9 L6 3.3"/><path d="M9.2 .8 V11 M6.8 8.7 L9.2 11.1 L11.6 8.7"/></g></svg>
<span id="t40" class="t" style="left:977px;top:309px;font-size:12.6px;font-weight:700;color:#ffffff;line-height:18px;letter-spacing:0px;transform:scaleX(0.9567);transform-origin:0 0;">Team type</span>
<span id="t41" class="t" style="left:1053px;top:309px;font-size:12.6px;font-weight:700;color:#ffffff;line-height:18px;letter-spacing:0px;transform:scaleX(0.9244);transform-origin:0 0;">Discipline</span>
<svg style="left:1114px;top:311px;" width="13" height="12" viewBox="0 0 13 12"><g fill="none" stroke="#f6f6f6" stroke-width="1.4" stroke-linecap="round" stroke-linejoin="round"><path d="M3.6 11.2 V1 M1.2 3.3 L3.6 .9 L6 3.3"/><path d="M9.2 .8 V11 M6.8 8.7 L9.2 11.1 L11.6 8.7"/></g></svg>
<span id="t42" class="t" style="left:1167px;top:309px;font-size:12.6px;font-weight:700;color:#ffffff;line-height:18px;letter-spacing:0px;transform:scaleX(0.9298);transform-origin:0 0;">Gender</span>
<svg style="left:1214px;top:311px;" width="13" height="12" viewBox="0 0 13 12"><g fill="none" stroke="#f6f6f6" stroke-width="1.4" stroke-linecap="round" stroke-linejoin="round"><path d="M3.6 11.2 V1 M1.2 3.3 L3.6 .9 L6 3.3"/><path d="M9.2 .8 V11 M6.8 8.7 L9.2 11.1 L11.6 8.7"/></g></svg>
<span id="t43" class="t" style="left:1270px;top:309px;font-size:12.6px;font-weight:700;color:#ffffff;line-height:18px;letter-spacing:0px;transform:scaleX(0.9487);transform-origin:0 0;">Age category</span>
<svg style="left:1351.7px;top:311px;" width="13" height="12" viewBox="0 0 13 12"><g fill="none" stroke="#f6f6f6" stroke-width="1.4" stroke-linecap="round" stroke-linejoin="round"><path d="M3.6 11.2 V1 M1.2 3.3 L3.6 .9 L6 3.3"/><path d="M9.2 .8 V11 M6.8 8.7 L9.2 11.1 L11.6 8.7"/></g></svg>
<span id="t44" class="t" style="left:1489px;top:309px;font-size:12.6px;font-weight:700;color:#ffffff;line-height:18px;letter-spacing:0px;transform:scaleX(0.8918);transform-origin:0 0;">Clubs</span>
<svg style="left:1526px;top:311px;" width="13" height="12" viewBox="0 0 13 12"><g fill="none" stroke="#f6f6f6" stroke-width="1.4" stroke-linecap="round" stroke-linejoin="round"><path d="M3.6 11.2 V1 M1.2 3.3 L3.6 .9 L6 3.3"/><path d="M9.2 .8 V11 M6.8 8.7 L9.2 11.1 L11.6 8.7"/></g></svg>
<span id="t45" class="t" style="left:1666px;top:309px;font-size:12.6px;font-weight:700;color:#ffffff;line-height:18px;letter-spacing:0px;transform:scaleX(0.9091);transform-origin:0 0;">Status</span>
<div style="left:450.5px;top:331px;width:255px;height:29.5px;background:#222739;border:1px solid #3a4151;border-radius:4px"></div>
<div style="left:724px;top:331px;width:58px;height:29.5px;background:#222739;border:1px solid #3a4151;border-radius:4px"></div>
<div style="left:800px;top:331px;width:159px;height:29.5px;background:#222739;border:1px solid #3a4151;border-radius:4px"></div>
<div style="left:1053px;top:331px;width:96px;height:28.5px;background:#222739;border:1px solid #3a4151;border-radius:4px"></div>
<svg style="left:1127px;top:342px;" width="13" height="8" viewBox="0 0 13 8"><path fill="none" stroke="#c3c7d0" stroke-width="1.25" stroke-linecap="round" stroke-linejoin="round" d="M.8 .9 L6.2 6.3 L11.6 .9"/></svg>
<div style="left:1167px;top:331px;width:85px;height:28.5px;background:#222739;border:1px solid #3a4151;border-radius:4px"></div>
<svg style="left:1230px;top:342px;" width="13" height="8" viewBox="0 0 13 8"><path fill="none" stroke="#c3c7d0" stroke-width="1.25" stroke-linecap="round" stroke-linejoin="round" d="M.8 .9 L6.2 6.3 L11.6 .9"/></svg>
<div style="left:1270px;top:331px;width:201px;height:28.5px;background:#222739;border:1px solid #3a4151;border-radius:4px"></div>
<svg style="left:1449px;top:342px;" width="13" height="8" viewBox="0 0 13 8"><path fill="none" stroke="#c3c7d0" stroke-width="1.25" stroke-linecap="round" stroke-linejoin="round" d="M.8 .9 L6.2 6.3 L11.6 .9"/></svg>
<div style="left:1489px;top:331px;width:159px;height:29.5px;background:#222739;border:1px solid #3a4151;border-radius:4px"></div>
<div style="left:1666px;top:331px;width:85px;height:28.5px;background:#222739;border:1px solid #3a4151;border-radius:4px"></div>
<svg style="left:1729px;top:342px;" width="13" height="8" viewBox="0 0 13 8"><path fill="none" stroke="#c3c7d0" stroke-width="1.25" stroke-linecap="round" stroke-linejoin="round" d="M.8 .9 L6.2 6.3 L11.6 .9"/></svg>
<svg style="left:320.9px;top:392.1px;" width="10" height="9" viewBox="0 0 10 9"><g fill="#fff"><rect y="0" width="9.4" height="1.5"/><rect y="2.15" width="9.4" height="1.5"/><rect y="4.3" width="9.4" height="1.5"/><rect y="6.45" width="9.4" height="1.5"/></g></svg>
<span id="t46" class="t" style="left:348px;top:388px;font-size:12.6px;font-weight:400;color:#f4f5f7;line-height:18px;letter-spacing:-0.28px;">1</span>
<svg style="left:411px;top:389px;" width="15" height="12" viewBox="0 0 15 12"><rect width="15" height="11.2" rx="1" fill="#3d4350"/><path d="M1.2 9.8 L4.8 5 L6.8 7.4 L10 3.4 L13.8 9.8 Z" fill="#656c7a"/><circle cx="4" cy="3.2" r="1.3" fill="#656c7a"/></svg>
<span id="t47" class="t" style="left:450.5px;top:380px;font-size:12.6px;font-weight:400;color:#f4f5f7;line-height:18px;letter-spacing:0px;transform:scaleX(0.9133);transform-origin:0 0;">1.NL "SREDIŠTA SPLIT Mlađi pioniri-Pioniri</span>
<span id="t48" class="t" style="left:450.5px;top:396px;font-size:12.6px;font-weight:400;color:#f4f5f7;line-height:18px;letter-spacing:0px;transform:scaleX(0.9836);transform-origin:0 0;">21/22</span>
<span id="t49" class="t" style="left:724px;top:388px;font-size:12.6px;font-weight:400;color:#f4f5f7;line-height:18px;letter-spacing:0px;transform:scaleX(0.9522);transform-origin:0 0;">2021/2022</span>
<span id="t50" class="t" style="left:800px;top:388px;font-size:12.6px;font-weight:400;color:#f4f5f7;line-height:18px;letter-spacing:0px;transform:scaleX(0.8912);transform-origin:0 0;">HNS</span>
<span id="t51" class="t" style="left:977px;top:388px;font-size:12.6px;font-weight:400;color:#f4f5f7;line-height:18px;letter-spacing:0px;transform:scaleX(0.9407);transform-origin:0 0;">Club team</span>
<span id="t52" class="t" style="left:1053px;top:388px;font-size:12.6px;font-weight:400;color:#f4f5f7;line-height:18px;letter-spacing:0px;transform:scaleX(0.9596);transform-origin:0 0;">Football</span>
<span id="t53" class="t" style="left:1167px;top:388px;font-size:12.6px;font-weight:400;color:#f4f5f7;line-height:18px;letter-spacing:0px;transform:scaleX(0.9525);transform-origin:0 0;">Male</span>
<span id="t54" class="t" style="left:1270px;top:388px;font-size:12.6px;font-weight:400;color:#f4f5f7;line-height:18px;letter-spacing:0px;transform:scaleX(0.9151);transform-origin:0 0;">Pioneers</span>
<span id="t55" class="t" style="left:1489px;top:388px;font-size:12.6px;font-weight:400;color:#f4f5f7;line-height:18px;letter-spacing:0px;transform:scaleX(0.9489);transform-origin:0 0;">16</span>
<div style="left:1666px;top:388px;width:47px;height:18px;background:#c8e6c9;border-radius:2.5px"></div>
<span id="t56" class="t" style="left:1672px;top:390px;font-size:10.2px;font-weight:700;color:#266129;line-height:15px;letter-spacing:0px;transform:scaleX(0.9261);transform-origin:0 0;">ACTIVE</span>
<div style="left:1835px;top:381px;width:28px;height:30px;background:#2196f3;border-radius:4px"></div>
<svg style="left:1843px;top:390px;" width="12" height="12" viewBox="0 0 12 12"><g fill="none" stroke="#fff" stroke-width="1.35" stroke-linecap="round"><path d="M1.1 1.4 L10.9 10.8 M10.9 1.4 L1.1 10.8"/></g></svg>
<div style="left:1804px;top:381px;width:28px;height:30px;background:#2196f3;border-radius:4px"></div>
<svg style="left:1812px;top:390px;" width="12" height="12" viewBox="0 0 12 12"><g fill="none" stroke="#fff" stroke-width="1.35" stroke-linecap="round" stroke-linejoin="round"><path d="M6 .7 V11 M1.2 6.3 L6 11.1 L10.8 6.3"/></g></svg>
<svg style="left:320.9px;top:439.1px;" width="10" height="9" viewBox="0 0 10 9"><g fill="#fff"><rect y="0" width="9.4" height="1.5"/><rect y="2.15" width="9.4" height="1.5"/><rect y="4.3" width="9.4" height="1.5"/><rect y="6.45" width="9.4" height="1.5"/></g></svg>
<span id="t57" class="t" style="left:348px;top:435px;font-size:12.6px;font-weight:400;color:#f4f5f7;line-height:18px;letter-spacing:-0.28px;">2</span>
<span id="t58" class="t" style="left:450.5px;top:435px;font-size:12.6px;font-weight:400;color:#f4f5f7;line-height:18px;letter-spacing:0px;transform:scaleX(0.9391);transform-origin:0 0;">Hrvatski Telekom Prva liga 20/21</span>
<span id="t59" class="t" style="left:724px;top:435px;font-size:12.6px;font-weight:400;color:#f4f5f7;line-height:18px;letter-spacing:0px;transform:scaleX(0.9522);transform-origin:0 0;">2020/2021</span>
<span id="t60" class="t" style="left:800px;top:435px;font-size:12.6px;font-weight:400;color:#f4f5f7;line-height:18px;letter-spacing:0px;transform:scaleX(0.8912);transform-origin:0 0;">HNS</span>
<span id="t61" class="t" style="left:977px;top:435px;font-size:12.6px;font-weight:400;color:#f4f5f7;line-height:18px;letter-spacing:0px;transform:scaleX(0.9407);transform-origin:0 0;">Club team</span>
<span id="t62" class="t" style="left:1053px;top:435px;font-size:12.6px;font-weight:400;color:#f4f5f7;line-height:18px;letter-spacing:0px;transform:scaleX(0.9596);transform-origin:0 0;">Football</span>
<span id="t63" class="t" style="left:1167px;top:435px;font-size:12.6px;font-weight:400;color:#f4f5f7;line-height:18px;letter-spacing:0px;transform:scaleX(0.9525);transform-origin:0 0;">Male</span>
<span id="t64" class="t" style="left:1270px;top:435px;font-size:12.6px;font-weight:400;color:#f4f5f7;line-height:18px;letter-spacing:0px;transform:scaleX(0.9133);transform-origin:0 0;">Seniors</span>
<span id="t65" class="t" style="left:1489px;top:435px;font-size:12.6px;font-weight:400;color:#f4f5f7;line-height:18px;letter-spacing:0px;transform:scaleX(0.9489);transform-origin:0 0;">10</span>
<div style="left:1666px;top:435px;width:47px;height:18px;background:#c8e6c9;border-radius:2.5px"></div>
<span id="t66" class="t" style="left:1672px;top:437px;font-size:10.2px;font-weight:700;color:#266129;line-height:15px;letter-spacing:0px;transform:scaleX(0.9261);transform-origin:0 0;">ACTIVE</span>
<div style="left:1835px;top:428px;width:28px;height:30px;background:#2196f3;border-radius:4px"></div>
<svg style="left:1843px;top:437px;" width="12" height="12" viewBox="0 0 12 12"><g fill="none" stroke="#fff" stroke-width="1.35" stroke-linecap="round"><path d="M1.1 1.4 L10.9 10.8 M10.9 1.4 L1.1 10.8"/></g></svg>
<div style="left:1804px;top:428px;width:28px;height:30px;background:#2196f3;border-radius:4px"></div>
<svg style="left:1812px;top:437px;" width="12" height="12" viewBox="0 0 12 12"><g fill="none" stroke="#fff" stroke-width="1.35" stroke-linecap="round" stroke-linejoin="round"><path d="M6 .7 V11 M1.2 6.3 L6 11.1 L10.8 6.3"/></g></svg>
<div style="left:1773px;top:428px;width:29px;height:30px;background:#2196f3;border-radius:4px"></div>
<svg style="left:1781.5px;top:437px;" width="12" height="12" viewBox="0 0 12 12"><g fill="none" stroke="#fff" stroke-width="1.35" stroke-linecap="round" stroke-linejoin="round"><path d="M6 11.3 V1 M1.2 5.7 L6 .9 L10.8 5.7"/></g></svg>
<svg style="left:320.9px;top:482.1px;" width="10" height="9" viewBox="0 0 10 9"><g fill="#fff"><rect y="0" width="9.4" height="1.5"/><rect y="2.15" width="9.4" height="1.5"/><rect y="4.3" width="9.4" height="1.5"/><rect y="6.45" width="9.4" height="1.5"/></g></svg>
<span id="t67" class="t" style="left:348px;top:478px;font-size:12.6px;font-weight:400;color:#f4f5f7;line-height:18px;letter-spacing:-0.28px;">3</span>
<span id="t68" class="t" style="left:450.5px;top:478px;font-size:12.6px;font-weight:400;color:#f4f5f7;line-height:18px;letter-spacing:0px;transform:scaleX(0.9663);transform-origin:0 0;">Hrvatski nogometni kup 20/21</span>
<span id="t69" class="t" style="left:724px;top:478px;font-size:12.6px;font-weight:400;color:#f4f5f7;line-height:18px;letter-spacing:0px;transform:scaleX(0.9522);transform-origin:0 0;">2020/2021</span>
<span id="t70" class="t" style="left:800px;top:478px;font-size:12.6px;font-weight:400;color:#f4f5f7;line-height:18px;letter-spacing:0px;transform:scaleX(0.8912);transform-origin:0 0;">HNS</span>
<span id="t71" class="t" style="left:977px;top:478px;font-size:12.6px;font-weight:400;color:#f4f5f7;line-height:18px;letter-spacing:0px;transform:scaleX(0.9407);transform-origin:0 0;">Club team</span>
<span id="t72" class="t" style="left:1053px;top:478px;font-size:12.6px;font-weight:400;color:#f4f5f7;line-height:18px;letter-spacing:0px;transform:scaleX(0.9596);transform-origin:0 0;">Football</span>
<span id="t73" class="t" style="left:1167px;top:478px;font-size:12.6px;font-weight:400;color:#f4f5f7;line-height:18px;letter-spacing:0px;transform:scaleX(0.9525);transform-origin:0 0;">Male</span>
<span id="t74" class="t" style="left:1270px;top:478px;font-size:12.6px;font-weight:400;color:#f4f5f7;line-height:18px;letter-spacing:0px;transform:scaleX(0.9133);transform-origin:0 0;">Seniors</span>
<span id="t75" class="t" style="left:1489px;top:478px;font-size:12.6px;font-weight:400;color:#f4f5f7;line-height:18px;letter-spacing:0px;transform:scaleX(0.9489);transform-origin:0 0;">48</span>
<div style="left:1666px;top:478px;width:47px;height:18px;background:#c8e6c9;border-radius:2.5px"></div>
<span id="t76" class="t" style="left:1672px;top:480px;font-size:10.2px;font-weight:700;color:#266129;line-height:15px;letter-spacing:0px;transform:scaleX(0.9261);transform-origin:0 0;">ACTIVE</span>
<div style="left:1835px;top:471px;width:28px;height:30px;background:#2196f3;border-radius:4px"></div>
<svg style="left:1843px;top:480px;" width="12" height="12" viewBox="0 0 12 12"><g fill="none" stroke="#fff" stroke-width="1.35" stroke-linecap="round"><path d="M1.1 1.4 L10.9 10.8 M10.9 1.4 L1.1 10.8"/></g></svg>
<div style="left:1804px;top:471px;width:28px;height:30px;background:#2196f3;border-radius:4px"></div>
<svg style="left:1812px;top:480px;" width="12" height="12" viewBox="0 0 12 12"><g fill="none" stroke="#fff" stroke-width="1.35" stroke-linecap="round" stroke-linejoin="round"><path d="M6 .7 V11 M1.2 6.3 L6 11.1 L10.8 6.3"/></g></svg>
<div style="left:1773px;top:471px;width:29px;height:30px;background:#2196f3;border-radius:4px"></div>
<svg style="left:1781.5px;top:480px;" width="12" height="12" viewBox="0 0 12 12"><g fill="none" stroke="#fff" stroke-width="1.35" stroke-linecap="round" stroke-linejoin="round"><path d="M6 11.3 V1 M1.2 5.7 L6 .9 L10.8 5.7"/></g></svg>
<svg style="left:320.9px;top:526.1px;" width="10" height="9" viewBox="0 0 10 9"><g fill="#fff"><rect y="0" width="9.4" height="1.5"/><rect y="2.15" width="9.4" height="1.5"/><rect y="4.3" width="9.4" height="1.5"/><rect y="6.45" width="9.4" height="1.5"/></g></svg>
<span id="t77" class="t" style="left:348px;top:522px;font-size:12.6px;font-weight:400;color:#f4f5f7;line-height:18px;letter-spacing:-0.28px;">4</span>
<svg style="left:411px;top:522.2px;" width="15" height="12" viewBox="0 0 15 12"><rect width="15" height="11.2" rx="1" fill="#3d4350"/><path d="M1.2 9.8 L4.8 5 L6.8 7.4 L10 3.4 L13.8 9.8 Z" fill="#656c7a"/><circle cx="4" cy="3.2" r="1.3" fill="#656c7a"/></svg>
<span id="t78" class="t" style="left:450.5px;top:522px;font-size:12.6px;font-weight:400;color:#f4f5f7;line-height:18px;letter-spacing:0px;transform:scaleX(0.9007);transform-origin:0 0;">2.NL "SREDIŠTA SPLIT Kadeti-Juniori 21/22</span>
<span id="t79" class="t" style="left:724px;top:522px;font-size:12.6px;font-weight:400;color:#f4f5f7;line-height:18px;letter-spacing:0px;transform:scaleX(0.9522);transform-origin:0 0;">2021/2022</span>
<span id="t80" class="t" style="left:800px;top:522px;font-size:12.6px;font-weight:400;color:#f4f5f7;line-height:18px;letter-spacing:0px;transform:scaleX(0.8912);transform-origin:0 0;">HNS</span>
<span id="t81" class="t" style="left:977px;top:522px;font-size:12.6px;font-weight:400;color:#f4f5f7;line-height:18px;letter-spacing:0px;transform:scaleX(0.9407);transform-origin:0 0;">Club team</span>
<span id="t82" class="t" style="left:1053px;top:522px;font-size:12.6px;font-weight:400;color:#f4f5f7;line-height:18px;letter-spacing:0px;transform:scaleX(0.9596);transform-origin:0 0;">Football</span>
<span id="t83" class="t" style="left:1167px;top:522px;font-size:12.6px;font-weight:400;color:#f4f5f7;line-height:18px;letter-spacing:0px;transform:scaleX(0.9525);transform-origin:0 0;">Male</span>
<span id="t84" class="t" style="left:1270px;top:522px;font-size:12.6px;font-weight:400;color:#f4f5f7;line-height:18px;letter-spacing:0px;transform:scaleX(0.9021);transform-origin:0 0;">Cadets</span>
<span id="t85" class="t" style="left:1489px;top:522px;font-size:12.6px;font-weight:400;color:#f4f5f7;line-height:18px;letter-spacing:0px;transform:scaleX(0.9489);transform-origin:0 0;">10</span>
<div style="left:1666px;top:522px;width:47px;height:18px;background:#c8e6c9;border-radius:2.5px"></div>
<span id="t86" class="t" style="left:1672px;top:524px;font-size:10.2px;font-weight:700;color:#266129;line-height:15px;letter-spacing:0px;transform:scaleX(0.9261);transform-origin:0 0;">ACTIVE</span>
<div style="left:1835px;top:515px;width:28px;height:30px;background:#2196f3;border-radius:4px"></div>
<svg style="left:1843px;top:524px;" width="12" height="12" viewBox="0 0 12 12"><g fill="none" stroke="#fff" stroke-width="1.35" stroke-linecap="round"><path d="M1.1 1.4 L10.9 10.8 M10.9 1.4 L1.1 10.8"/></g></svg>
<div style="left:1804px;top:515px;width:28px;height:30px;background:#2196f3;border-radius:4px"></div>
<svg style="left:1812px;top:524px;" width="12" height="12" viewBox="0 0 12 12"><g fill="none" stroke="#fff" stroke-width="1.35" stroke-linecap="round" stroke-linejoin="round"><path d="M6 11.3 V1 M1.2 5.7 L6 .9 L10.8 5.7"/></g></svg>
<span id="t87" class="t" style="left:1498px;top:573px;font-size:11.6px;font-weight:400;color:#a7adb9;line-height:16px;letter-spacing:0px;transform:scaleX(0.9148);transform-origin:0 0;">Items per page:</span>
<div style="left:1578px;top:566px;width:46px;height:28.5px;background:#222838;border:1px solid #3a4151;border-radius:4px"></div>
<span id="t88" class="t" style="left:1585.7px;top:572px;font-size:12.6px;font-weight:400;color:#f4f5f7;line-height:18px;letter-spacing:0px;transform:scaleX(0.8205);transform-origin:0 0;">10</span>
<svg style="left:1602.3px;top:576.5px;" width="13" height="8" viewBox="0 0 13 8"><path fill="none" stroke="#d5d8de" stroke-width="1.25" stroke-linecap="round" stroke-linejoin="round" d="M.8 .9 L6.2 6.3 L11.6 .9"/></svg>
<span id="t89" class="t" style="left:1642.5px;top:573px;font-size:11.6px;font-weight:400;color:#a7adb9;line-height:16px;letter-spacing:0px;transform:scaleX(0.9201);transform-origin:0 0;">1 - 4 of 4 results</span>
<svg style="left:1740.5px;top:575.5px;" width="10" height="8" viewBox="0 0 10 8"><path fill="none" stroke="#9aa1ae" stroke-width="1.15" stroke-linecap="round" stroke-linejoin="round" d="M4 .8 L1 3.6 L4 6.4"/><g transform="translate(4.2,0)"><path fill="none" stroke="#9aa1ae" stroke-width="1.15" stroke-linecap="round" stroke-linejoin="round" d="M4 .8 L1 3.6 L4 6.4"/></g></svg>
<svg style="left:1769.3px;top:575px;" width="6" height="9" viewBox="0 0 6 9"><path fill="none" stroke="#9aa1ae" stroke-width="1.2" stroke-linecap="round" stroke-linejoin="round" d="M4.4 .9 L1.2 4.3 L4.4 7.7"/></svg>
<div style="left:1788px;top:568px;width:25px;height:25px;background:#2196f3;border-radius:4px"></div>
<span id="t90" class="t" style="left:1797.3px;top:572px;font-size:12.6px;font-weight:400;color:#ffffff;line-height:18px;letter-spacing:-0.28px;">1</span>
<svg style="left:1826px;top:575px;" width="6" height="9" viewBox="0 0 6 9"><path fill="none" stroke="#9aa1ae" stroke-width="1.2" stroke-linecap="round" stroke-linejoin="round" d="M1.4 .9 L4.6 4.3 L1.4 7.7"/></svg>
<svg style="left:1852px;top:575.5px;" width="10" height="8" viewBox="0 0 10 8"><path fill="none" stroke="#9aa1ae" stroke-width="1.15" stroke-linecap="round" stroke-linejoin="round" d="M1 .8 L4 3.6 L1 6.4"/><g transform="translate(4.2,0)"><path fill="none" stroke="#9aa1ae" stroke-width="1.15" stroke-linecap="round" stroke-linejoin="round" d="M1 .8 L4 3.6 L1 6.4"/></g></svg>
<div style="left:294px;top:635px;width:73px;height:30px;background:#2196f3;border-radius:4px"></div>
<svg style="left:304px;top:644px;" width="12" height="12" viewBox="0 0 12 12"><path d="M6 .6v10.8M.6 6h10.8" stroke="#fff" stroke-width="1.5" fill="none" stroke-linecap="round"/></svg>
<span id="t91" class="t" style="left:325px;top:642px;font-size:12.6px;font-weight:700;color:#ffffff;line-height:18px;letter-spacing:0px;transform:scaleX(0.9190);transform-origin:0 0;">Add</span>
<div style="left:1881px;top:230px;width:44px;height:40px;background:#2196f3;border-radius:6px 0 0 6px"></div>
<svg style="left:1886.9px;top:235.7px;" width="28" height="28" viewBox="0 0 28 28"><g transform="translate(14,14)"><path fill="none" stroke="#fff" stroke-width="2.4" stroke-linejoin="round" d="M0.00 -12.15 L0.48 -12.13 L0.95 -12.07 L1.41 -11.90 L1.80 -11.38 L2.03 -10.20 L2.17 -9.02 L2.39 -8.49 L2.69 -8.27 L3.00 -8.12 L3.31 -7.99 L3.62 -7.86 L3.95 -7.75 L4.31 -7.70 L4.85 -7.91 L5.78 -8.65 L6.77 -9.32 L7.42 -9.41 L7.86 -9.21 L8.24 -8.92 L8.59 -8.59 L8.92 -8.24 L9.21 -7.86 L9.41 -7.42 L9.32 -6.77 L8.65 -5.78 L7.91 -4.85 L7.70 -4.31 L7.75 -3.95 L7.86 -3.62 L7.99 -3.31 L8.12 -3.00 L8.27 -2.69 L8.49 -2.39 L9.02 -2.17 L10.20 -2.03 L11.38 -1.80 L11.90 -1.41 L12.07 -0.95 L12.13 -0.48 L12.15 -0.00 L12.13 0.48 L12.07 0.95 L11.90 1.41 L11.38 1.80 L10.20 2.03 L9.02 2.17 L8.49 2.39 L8.27 2.69 L8.12 3.00 L7.99 3.31 L7.86 3.62 L7.75 3.95 L7.70 4.31 L7.91 4.85 L8.65 5.78 L9.32 6.77 L9.41 7.42 L9.21 7.86 L8.92 8.24 L8.59 8.59 L8.24 8.92 L7.86 9.21 L7.42 9.41 L6.77 9.32 L5.78 8.65 L4.85 7.91 L4.31 7.70 L3.95 7.75 L3.62 7.86 L3.31 7.99 L3.00 8.12 L2.69 8.27 L2.39 8.49 L2.17 9.02 L2.03 10.20 L1.80 11.38 L1.41 11.90 L0.95 12.07 L0.48 12.13 L0.00 12.15 L-0.48 12.13 L-0.95 12.07 L-1.41 11.90 L-1.80 11.38 L-2.03 10.20 L-2.17 9.02 L-2.39 8.49 L-2.69 8.27 L-3.00 8.12 L-3.31 7.99 L-3.62 7.86 L-3.95 7.75 L-4.31 7.70 L-4.85 7.91 L-5.78 8.65 L-6.77 9.32 L-7.42 9.41 L-7.86 9.21 L-8.24 8.92 L-8.59 8.59 L-8.92 8.24 L-9.21 7.86 L-9.41 7.42 L-9.32 6.77 L-8.65 5.78 L-7.91 4.85 L-7.70 4.31 L-7.75 3.95 L-7.86 3.62 L-7.99 3.31 L-8.12 3.00 L-8.27 2.69 L-8.49 2.39 L-9.02 2.17 L-10.20 2.03 L-11.38 1.80 L-11.90 1.41 L-12.07 0.95 L-12.13 0.48 L-12.15 0.00 L-12.13 -0.48 L-12.07 -0.95 L-11.90 -1.41 L-11.38 -1.80 L-10.20 -2.03 L-9.02 -2.17 L-8.49 -2.39 L-8.27 -2.69 L-8.12 -3.00 L-7.99 -3.31 L-7.86 -3.62 L-7.75 -3.95 L-7.70 -4.31 L-7.91 -4.85 L-8.65 -5.78 L-9.32 -6.77 L-9.41 -7.42 L-9.21 -7.86 L-8.92 -8.24 L-8.59 -8.59 L-8.24 -8.92 L-7.86 -9.21 L-7.42 -9.41 L-6.77 -9.32 L-5.78 -8.65 L-4.85 -7.91 L-4.31 -7.70 L-3.95 -7.75 L-3.62 -7.86 L-3.31 -7.99 L-3.00 -8.12 L-2.69 -8.27 L-2.39 -8.49 L-2.17 -9.02 L-2.03 -10.20 L-1.80 -11.38 L-1.41 -11.90 L-0.95 -12.07 L-0.48 -12.13 Z"/><circle r="3.5" fill="none" stroke="#fff" stroke-width="2.4"/></g></svg>
</main>
<section class="highlight">
<div style="left:1835px;top:319px;width:28px;height:30px;background:#0d89ec;border-radius:4px"></div>
<svg style="left:1843px;top:328px;" width="12" height="12" viewBox="0 0 12 12"><g fill="none" stroke="#fff" stroke-width="1.35" stroke-linecap="round"><path d="M1.1 1.4 L10.9 10.8 M10.9 1.4 L1.1 10.8"/></g></svg>
<div style="left:1847px;top:349px;width:80px;height:23px;background:#ffffff"></div>
<span id="t92" class="t" style="left:1854.5px;top:353px;font-size:11.6px;font-weight:400;color:#454545;line-height:16px;letter-spacing:0px;transform:scaleX(0.9621);transform-origin:0 0;">Remove all</span>
<div style="left:1808px;top:302px;width:112px;height:78px;border:9px solid #fb4141"></div>
<div style="left:1817px;top:311px;width:94px;height:60px;box-shadow:inset 0 5px 5px -3px rgba(0,0,0,.6), inset -5px 0 5px -3px rgba(0,0,0,.38), inset 4px 0 4px -3px rgba(0,0,0,.3)"></div>
</section>
</div></body></html>
